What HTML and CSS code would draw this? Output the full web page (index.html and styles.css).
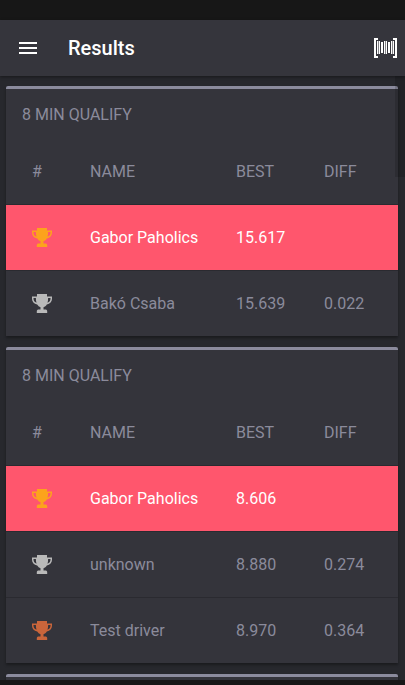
FILE: index.html
```html
<!DOCTYPE html>
<html lang="en">
<head>
<meta charset="utf-8">
<meta name="viewport" content="width=device-width, initial-scale=1">
<title>Results</title>
<link rel="stylesheet" href="styles.css">
</head>
<body>
<svg class="sprite" aria-hidden="true">
  <symbol id="trophy" viewBox="0 0 20 19">
    <path fill-rule="evenodd" d="M5 0h10v2.500h5v2.200c0 2.800-2 5.200-5.200 5.800-.8 1.300-1.900 2.200-3.300 2.700v2.300h1.700c1.200 0 2 .7 2 1.700V19H4.800v-1.800c0-1 .8-1.700 2-1.700h1.700v-2.300c-1.400-.5-2.500-1.400-3.300-2.700C2 9.900 0 7.500 0 4.700V2.500h5zM1.500 4v.8c0 1.800 1.100 3.300 3 3.900C4 7.200 3.900 5.600 3.900 4zM16.100 4c0 1.600-.1 3.200-.6 4.700 1.900-.6 3-2.100 3-3.900V4z"/>
  </symbol>
</svg>
<header class="app-bar">
  <button class="icon-button" type="button" aria-label="Menu">
    <svg width="18" height="12" viewBox="0 0 18 12"><path d="M0 0h18v2H0zM0 5h18v2H0zM0 10h18v2H0z"/></svg>
  </button>
  <h1 class="app-title">Results</h1>
  <button class="icon-button scan-button" type="button" aria-label="Scan code">
    <svg width="24" height="20" viewBox="0 0 24 20"><path d="M1 0h4v2H3v16h2v2H1zM24 0h-4v2h2v16h-2v2h4zM4 3h1.200v13H4zM5.800 3H7v13H5.800zM8 4h2v11H8zM11 3h1.200v13H11zM12.800 3H14v13h-1.200zM15 4h2v11h-2zM18 3h1.200v13H18zM19.800 3H21v13h-1.200z"/></svg>
  </button>
</header>
<main class="content">
  <section class="card">
    <h2 class="card-title">8 MIN QUALIFY</h2>
    <table class="results">
      <thead>
        <tr><th class="col-rank">#</th><th>NAME</th><th class="col-best">BEST</th><th class="col-diff">DIFF</th></tr>
      </thead>
      <tbody>
        <tr class="leader"><td><svg class="trophy gold"><use href="#trophy"/></svg></td><td>Gabor Paholics</td><td>15.617</td><td></td></tr>
        <tr><td><svg class="trophy silver"><use href="#trophy"/></svg></td><td>Bakó Csaba</td><td>15.639</td><td>0.022</td></tr>
      </tbody>
    </table>
  </section>
  <section class="card">
    <h2 class="card-title">8 MIN QUALIFY</h2>
    <table class="results">
      <thead>
        <tr><th class="col-rank">#</th><th>NAME</th><th class="col-best">BEST</th><th class="col-diff">DIFF</th></tr>
      </thead>
      <tbody>
        <tr class="leader"><td><svg class="trophy gold"><use href="#trophy"/></svg></td><td>Gabor Paholics</td><td>8.606</td><td></td></tr>
        <tr><td><svg class="trophy silver"><use href="#trophy"/></svg></td><td>unknown</td><td>8.880</td><td>0.274</td></tr>
        <tr><td><svg class="trophy bronze"><use href="#trophy"/></svg></td><td>Test driver</td><td>8.970</td><td>0.364</td></tr>
      </tbody>
    </table>
  </section>
  <section class="card card-next"></section>
  <div class="scroll-thumb"></div>
</main>
</body>
</html>
```
FILE: styles.css
```css
* {
  box-sizing: border-box;
}

body {
  display: flex;
  flex-direction: column;
  height: 100vh;
  margin: 0;
  padding: 20px 0 5px;
  background: #171717;
  color: #8b8b9b;
  font: 16px/24px Roboto, sans-serif;
}

.sprite {
  position: absolute;
  width: 0;
  height: 0;
}

.app-bar {
  display: flex;
  flex: none;
  align-items: center;
  height: 56px;
  padding: 0 8px;
  background: #35353c;
  color: #fff;
  box-shadow: 0 1px 3px rgba(0, 0, 0, 0.4);
  z-index: 1;
}

.icon-button {
  display: flex;
  align-items: center;
  justify-content: center;
  width: 40px;
  height: 40px;
  padding: 0;
  border: 0;
  background: none;
  color: inherit;
}

.icon-button svg {
  fill: currentColor;
}

.app-title {
  margin: 0 auto 0 20px;
  font-size: 20px;
  font-weight: 500;
}

.scan-button {
  justify-content: flex-end;
}

.content {
  position: relative;
  display: flex;
  flex: 1;
  flex-direction: column;
  gap: 11px;
  min-height: 0;
  padding: 10px 7px 0 6px;
  overflow: hidden;
  background: #27282d;
}

.card {
  flex: none;
  border-top: 3px solid #8b8b9d;
  border-radius: 2px 2px 0 0;
  background: #34343b;
  box-shadow: 0 2px 3px rgba(0, 0, 0, 0.35);
}

.card-next {
  min-height: 50px;
}

.card-title {
  margin: 0;
  padding: 14px 16px 12px;
  font-size: 16px;
  font-weight: 400;
}

.results {
  width: 100%;
  border-collapse: separate;
  border-spacing: 0;
  table-layout: fixed;
}

th,
td {
  height: 65px;
  padding: 0 0 0 26px;
  font-weight: 400;
  text-align: left;
  white-space: nowrap;
}

tbody td {
  height: 66px;
  border-top: 1px solid #2a2a30;
}

.col-rank {
  width: 58px;
}

.col-best {
  width: 88px;
}

.col-diff {
  width: 100px;
}

.leader td {
  background: #ff566d;
  background-clip: padding-box;
  color: #fff;
}

.trophy {
  display: block;
  width: 20px;
  height: 19px;
}

.gold {
  fill: #fca31c;
}

.silver {
  fill: #b9b9b9;
}

.bronze {
  fill: #c9653b;
}

.scroll-thumb {
  position: absolute;
  top: 0;
  right: 0;
  width: 10px;
  height: 101px;
  background: rgba(0, 0, 0, 0.15);
}
```
